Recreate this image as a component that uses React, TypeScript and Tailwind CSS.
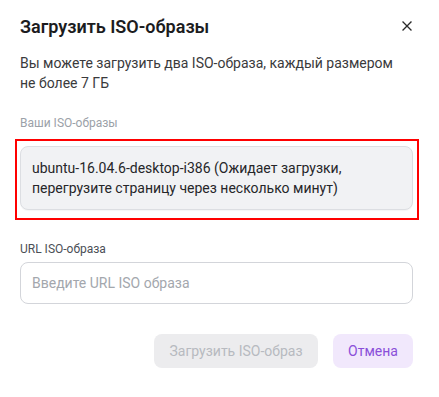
import { useState } from 'react'

const font = { fontFamily: 'Roboto, "Noto Sans", sans-serif' }

function CloseIcon() {
  return (
    <svg width="10" height="10" viewBox="0 0 10 10" fill="none" stroke="#2a2a2a" strokeWidth="1.3" strokeLinecap="square">
      <path d="M1 1L9 9M9 1L1 9" />
    </svg>
  )
}

export default function App() {
  const [url, setUrl] = useState('')

  return (
    <div className="w-[439px] h-[397px] bg-white pl-5 pr-[26px] pt-[13px]" style={font}>
      <div className="flex items-start justify-between">
        <h2 className="text-[18px] leading-7 font-semibold text-[#1c1c1e]">Загрузить ISO-образы</h2>
        <button type="button" className="mt-[8px] mr-[1px] flex items-center justify-center" aria-label="Закрыть">
          <CloseIcon />
        </button>
      </div>

      <p className="mt-3 max-w-[380px] text-sm leading-5 text-[#3a3a3c]">
        Вы можете загрузить два ISO-образа, каждый размером не более 7 ГБ
      </p>

      <p className="mt-[22px] text-xs leading-4 text-[#9ba1a8]">Ваши ISO-образы</p>

      <div className="relative mt-[15px]">
        <div className="rounded-lg border border-[#dcdee2] bg-[#f1f2f4] px-[11px] py-[11px] text-sm leading-5 text-[#262629] shadow-[0_1px_1px_rgba(0,0,0,0.04)]">
          ubuntu-16.04.6-desktop-i386 (Ожидает загрузки, перегрузите страницу через несколько минут)
        </div>
        <div className="pointer-events-none absolute -left-[5px] -right-[6px] -top-[7px] -bottom-[10px] border-2 border-[#ff0000]" />
      </div>

      <label className="mt-[31px] block text-xs leading-4 text-[#4b4f56]" htmlFor="iso-url">
        URL ISO-образа
      </label>
      <input
        id="iso-url"
        value={url}
        onChange={(e) => setUrl(e.target.value)}
        placeholder="Введите URL ISO образа"
        className="mt-[5px] block h-[42px] w-full rounded-lg border border-[#d3d5da] bg-white px-[11px] text-sm text-[#262629] outline-none placeholder:text-[#a3a7ad]"
        style={font}
      />

      <div className="mt-[30px] flex justify-end gap-[15px]">
        <button
          type="button"
          disabled
          className="h-[34px] w-[164px] rounded-lg bg-[#ececee] text-sm text-[#b7bac0]"
          style={font}
        >
          Загрузить ISO-образ
        </button>
        <button
          type="button"
          className="h-[34px] w-[80px] rounded-lg bg-[#f1e8fc] text-sm text-[#8a4fd9]"
          style={font}
        >
          Отмена
        </button>
      </div>
    </div>
  )
}
